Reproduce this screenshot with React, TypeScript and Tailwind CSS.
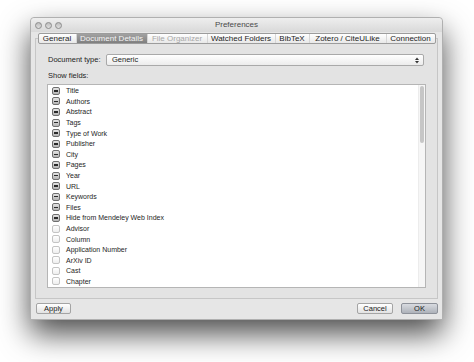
import React from "react";

const tabs = [
  { label: "General", w: 37 },
  { label: "Document Details", w: 71, active: true },
  { label: "File Organizer", w: 60, disabled: true },
  { label: "Watched Folders", w: 68 },
  { label: "BibTeX", w: 34 },
  { label: "Zotero / CiteULike", w: 77 },
  { label: "Connection", w: 49 },
];

const fields: [string, boolean][] = [
  ["Title", true],
  ["Authors", true],
  ["Abstract", true],
  ["Tags", true],
  ["Type of Work", true],
  ["Publisher", true],
  ["City", true],
  ["Pages", true],
  ["Year", true],
  ["URL", true],
  ["Keywords", true],
  ["Files", true],
  ["Hide from Mendeley Web Index", true],
  ["Advisor", false],
  ["Column", false],
  ["Application Number", false],
  ["ArXiv ID", false],
  ["Cast", false],
  ["Chapter", false],
];

function Check({ on }: { on: boolean }) {
  if (on) {
    return (
      <div className="w-[8px] h-[8px] rounded-[2px] border border-[#6f6f6f] bg-gradient-to-b from-[#e4e4e4] to-[#b4b4b4] flex items-center justify-center">
        <div className="w-[4px] h-[1.5px] bg-[#2a2a2a]" />
      </div>
    );
  }
  return <div className="w-[8px] h-[8px] rounded-[2px] border border-[#c4c4c4] bg-gradient-to-b from-[#ffffff] to-[#eeeeee]" />;
}

function Button({ label, w, primary }: { label: string; w: number; primary?: boolean }) {
  return (
    <div
      style={{ width: w }}
      className={
        "h-[11px] rounded-[2px] border flex items-center justify-center text-[7.5px] leading-none " +
        (primary
          ? "border-[#8e929a] bg-gradient-to-b from-[#d8dbe0] to-[#aeb2ba] text-[#1a1a1a]"
          : "border-[#a4a4a4] bg-gradient-to-b from-[#ffffff] to-[#e2e2e2] text-[#1a1a1a]")
      }
    >
      {label}
    </div>
  );
}

export default function App() {
  return (
    <div
      className="w-[474px] h-[362px] bg-white overflow-hidden pt-[17px] pl-[30px]"
      style={{ fontFamily: '"Liberation Sans", Arial, sans-serif' }}
    >
      <div className="w-[413px] flex flex-col bg-[#e6e6e6] rounded-t-[4px] shadow-[0_14px_30px_rgba(0,0,0,0.7)] border border-[#b0b0b0]">
        {/* title bar */}
        <div className="h-[14px] flex items-center rounded-t-[4px] bg-gradient-to-b from-[#eeeeee] to-[#d9d9d9]">
          <div className="w-[35px] flex gap-[3px] pl-[4px]">
            <div className="w-[7px] h-[7px] rounded-full border border-[#8c8c8c] bg-gradient-to-b from-[#bdbdbd] to-[#e0e0e0]" />
            <div className="w-[7px] h-[7px] rounded-full border border-[#8c8c8c] bg-gradient-to-b from-[#bdbdbd] to-[#e0e0e0]" />
            <div className="w-[7px] h-[7px] rounded-full border border-[#8c8c8c] bg-gradient-to-b from-[#bdbdbd] to-[#e0e0e0]" />
          </div>
          <div className="flex-1 text-center text-[8px] text-[#4a4a4a]">Preferences</div>
          <div className="w-[35px]" />
        </div>

        {/* tabs */}
        <div className="relative z-10 mt-[1px] flex justify-center">
          <div className="flex h-[11px] border border-[#9c9c9c] rounded-[2px] bg-gradient-to-b from-[#ffffff] to-[#e8e8e8] overflow-hidden">
            {tabs.map((t, i) => (
              <div
                key={t.label}
                style={{ width: t.w }}
                className={
                  "flex items-center justify-center text-[8px] leading-none whitespace-nowrap " +
                  (i > 0 ? "border-l border-[#d6d6d6] " : "") +
                  (t.active
                    ? "bg-gradient-to-b from-[#a2a2a2] to-[#7f7f7f] text-[#f4f4f4]"
                    : t.disabled
                    ? "text-[#a8a8a8]"
                    : "text-[#1e1e1e]")
                }
              >
                {t.label}
              </div>
            ))}
          </div>
        </div>

        {/* panel */}
        <div className="mx-[4px] -mt-[6px] h-[261px] border border-[#c6c6c6] bg-[#e3e3e3] flex flex-col pt-[15px] px-[11px]">
          <div className="flex items-center h-[12px]">
            <div className="w-[59px] text-[7.5px] text-[#1e1e1e] pl-[1px]">Document type:</div>
            <div className="flex-1 mr-[2px] h-[12px] rounded-[2px] border border-[#a9a9a9] bg-gradient-to-b from-[#ffffff] to-[#ececec] flex items-center pl-[5px] pr-[4px]">
              <span className="flex-1 text-[7.5px] text-[#1e1e1e]">Generic</span>
              <svg width="4" height="7" viewBox="0 0 4 7">
                <path d="M0 3 L2 0.5 L4 3 Z" fill="#333" />
                <path d="M0 4 L2 6.5 L4 4 Z" fill="#333" />
              </svg>
            </div>
          </div>
          <div className="mt-[5px] h-[10px] flex items-center text-[7.5px] text-[#1e1e1e] pl-[1px]">Show fields:</div>
          <div className="mt-[3px] h-[204px] border border-[#b5b5b5] bg-white flex">
            <div className="flex-1 flex flex-col pt-[0.5px]">
              {fields.map(([name, on]) => (
                <div key={name} className="h-[10.6px] flex items-center pl-[4px] gap-[6px]">
                  <Check on={on} />
                  <span className="text-[7px] text-[#1e1e1e] leading-none">{name}</span>
                </div>
              ))}
            </div>
            <div className="w-[7px] bg-[#f6f6f6] border-l border-[#ececec] pt-[1px] flex justify-center">
              <div className="w-[4px] h-[57px] rounded-full bg-[#c6c6c6]" />
            </div>
          </div>
        </div>

        {/* bottom buttons */}
        <div className="flex items-center pt-[4px] pb-[5px] pl-[5px] pr-[4px]">
          <Button label="Apply" w={35} />
          <div className="flex-1" />
          <Button label="Cancel" w={36} />
          <div className="w-[8px]" />
          <Button label="OK" w={37} primary />
        </div>
      </div>
    </div>
  );
}
